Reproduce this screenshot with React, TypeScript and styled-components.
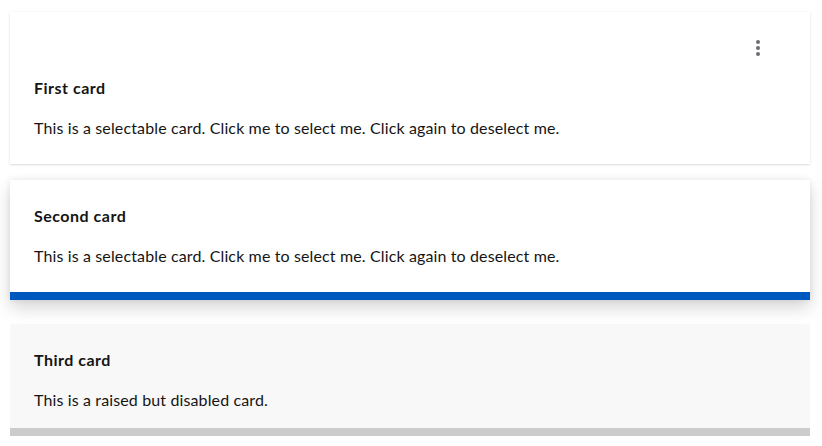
import React from "react";
import styled, { createGlobalStyle, css } from "styled-components";

const Global = createGlobalStyle`
  html, body { margin: 0; padding: 0; background: #ffffff; }
  body { font-family: Lato, "Liberation Sans", sans-serif; color: #151515; }
`;

const Page = styled.div`
  display: flex;
  flex-direction: column;
  padding: 12px 12px 0 10px;
  width: 800px;
`;

type Variant = "plain" | "selected" | "disabled";

const Card = styled.div<{ $variant: Variant; $gapAfter: number }>`
  display: flex;
  flex-direction: column;
  gap: 16px;
  padding: 24px 24px 24px;
  margin-bottom: ${(p) => p.$gapAfter}px;
  background: #ffffff;
  box-shadow: 0 1px 2px 0 rgba(3, 3, 3, 0.12), 0 0 2px 0 rgba(3, 3, 3, 0.06);
  ${(p) =>
    p.$variant === "selected" &&
    css`
      border-bottom: 8px solid #0058be;
      box-shadow: 0 8px 16px 0 rgba(3, 3, 3, 0.16), 0 0 6px 0 rgba(3, 3, 3, 0.08);
    `}
  ${(p) =>
    p.$variant === "disabled" &&
    css`
      background: #f8f8f8;
      box-shadow: none;
      padding-bottom: 16px;
      border-bottom: 8px solid #cccccc;
    `}
`;

const Header = styled.div`
  display: flex;
  justify-content: flex-end;
  height: 24px;
  align-items: center;
`;

const Kebab = styled.button`
  border: 0;
  background: transparent;
  padding: 0;
  width: 24px;
  height: 24px;
  margin-right: 16px;
  display: flex;
  align-items: center;
  justify-content: center;
  cursor: pointer;
`;

const Title = styled.div`
  font-size: 16px;
  line-height: 24px;
  font-weight: 700;
  letter-spacing: 0.5px;
`;

const Body = styled.div`
  font-size: 16px;
  line-height: 24px;
  letter-spacing: 0.13px;
`;

const KebabIcon = () => (
  <svg width="4" height="16" viewBox="0 0 4 16" fill="#6a6e73">
    <circle cx="2" cy="2" r="2" />
    <circle cx="2" cy="8" r="2" />
    <circle cx="2" cy="14" r="2" />
  </svg>
);

export default function App() {
  return (
    <>
      <Global />
      <Page>
        <Card $variant="plain" $gapAfter={16}>
          <Header>
            <Kebab aria-label="Actions">
              <KebabIcon />
            </Kebab>
          </Header>
          <Title>First card</Title>
          <Body>This is a selectable card. Click me to select me. Click again to deselect me.</Body>
        </Card>
        <Card $variant="selected" $gapAfter={24}>
          <Title>Second card</Title>
          <Body>This is a selectable card. Click me to select me. Click again to deselect me.</Body>
        </Card>
        <Card $variant="disabled" $gapAfter={0}>
          <Title>Third card</Title>
          <Body>This is a raised but disabled card.</Body>
        </Card>
      </Page>
    </>
  );
}
